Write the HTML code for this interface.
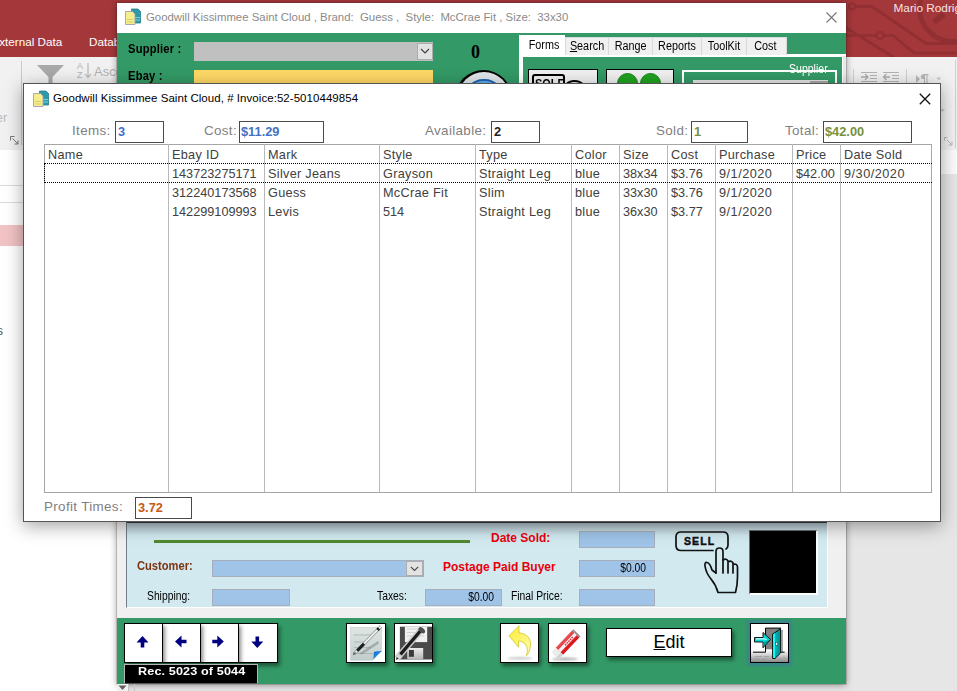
<!DOCTYPE html>
<html lang="en">
<head>
<meta charset="utf-8">
<title>Goodwill Kissimmee Saint Cloud</title>
<style>
*{box-sizing:border-box;margin:0;padding:0}
html,body{width:957px;height:691px;overflow:hidden;background:#e6e6e6;font-family:"Liberation Sans",sans-serif;}
.a{position:absolute}
.t{position:absolute;white-space:nowrap;line-height:1}
/* ---------- Access background ---------- */
#red{left:0;top:0;width:957px;height:57px;background:#a4373a}
#ribbon{left:0;top:57px;width:957px;height:93px;background:#f1f1f1}
#nav{left:0;top:150px;width:117px;height:541px;background:#fff}
#strip{left:846px;top:150px;width:111px;height:24px;background:#fbfbfb}
.rt{color:#fff;font-size:11.7px}
.gt{color:#b1b1b1;font-size:13px}
/* ---------- green window ---------- */
#win{left:117px;top:3px;width:729px;height:681px;background:#339966;box-shadow:0 0 0 1px rgba(60,40,40,.18),0 1px 7px rgba(0,0,0,.4)}
#wtitle{left:0;top:0;width:729px;height:30px;background:#fff}
.b13{font-weight:bold;font-size:12.6px;color:#000;transform:scaleX(.89);transform-origin:0 0;letter-spacing:.2px}
.tab span{display:inline-block;transform:scaleX(.9)}
.tab{top:34px;height:18px;background:#f0f0f0;border:1px solid #d9d9d9;border-bottom:none;font-size:12px;color:#000;text-align:center;line-height:17px}
.fld{background:#9fc4e7;border:1px solid #a6aebb}
.lbl{font-size:12px;color:#000;transform:scaleX(.86);transform-origin:0 0}
.lblr{transform-origin:100% 0}
.btn{background:#fff;border:1px solid #000;box-shadow:2px 3px 4px rgba(0,0,0,.45)}
/* ---------- dialog ---------- */
#dlg{left:23px;top:83px;width:918px;height:439px;background:#fff;border:1px solid #555;box-shadow:0 4px 17px rgba(0,0,0,.36)}
.dl{color:#7f7f7f;font-size:13.4px;letter-spacing:.35px}
.box{border:1px solid #4a4a4a;background:#fff;height:22px;top:37px}
.bv{font-weight:bold;font-size:12.8px;top:4px;left:2px}
.th,.td{font-size:12.7px;color:#404040;letter-spacing:.3px}
.n{letter-spacing:0}
.d{letter-spacing:.5px}
.vl{top:60px;width:1px;height:348px;background:#b9b9b9}
</style>
</head>
<body>
<!-- ================= ACCESS BACKGROUND ================= -->
<div id="red" class="a">
  <svg class="a" style="left:846px;top:0" width="111" height="57" viewBox="846 0 111 57">
    <g fill="none" stroke="#912f32" stroke-linejoin="round">
      <path d="M855 6.500 H872 L926 43.500 H958" stroke-width="3"/>
      <path d="M846 35.500 H876.500 M883.500 35.500 H893 L914 53 H958" stroke-width="2.700"/>
      <path d="M846 28 L895 58" stroke-width="2.700"/>
      <circle cx="953" cy="8" r="33.500" stroke-width="5"/>
      <path d="M934 22 L944 14" stroke-width="5.500"/>
      <circle cx="852" cy="6.500" r="3" stroke-width="2"/>
      <circle cx="880" cy="35.500" r="3.500" stroke-width="2"/>
    </g>
  </svg>
  <div class="t rt" style="left:-8.600px;top:36px">External Data</div>
  <div class="t rt" style="left:89px;top:36px">Database Tools</div>
  <div class="t rt" style="left:893.500px;top:2.800px;font-size:11.800px;color:#f6e4e4">Mario Rodriguez</div>
</div>
<div id="ribbon" class="a">
  <div class="a" style="left:21px;top:4px;width:1px;height:84px;background:#c9c9c9"></div>
  <svg class="a" style="left:36px;top:7px" width="30" height="24" viewBox="0 0 30 24"><path d="M1 1 H28 L16.500 13 V24 H12.500 V13 Z" fill="#a9a9a9"/></svg>
  <div class="t" style="left:77px;top:5px;font-size:9px;color:#b1b1b1;line-height:8.500px">A<br>Z</div>
  <svg class="a" style="left:84px;top:6px" width="8" height="16" viewBox="0 0 8 16"><path d="M4 0 V14 M1 11 L4 14.500 L7 11" fill="none" stroke="#b1b1b1" stroke-width="1.100"/></svg>
  <div class="t gt" style="left:94px;top:8px">Ascending</div>
  <div class="t gt" style="left:-4px;top:55px;font-size:12.4px;color:#b9b9b9">er</div>
  <svg class="a" style="left:10px;top:79px" width="9" height="9" viewBox="0 0 9 9"><path d="M0.500 4.500 V0.500 H4.500 M2.500 2.500 L8 8 M8 4.500 V8 H4.500" fill="none" stroke="#777" stroke-width="1"/></svg>
  <!-- right side -->
  <div class="a" style="left:853px;top:12px;width:1px;height:22px;background:#cfcfcf"></div>
  <svg class="a" style="left:861px;top:15px" width="40" height="11" viewBox="0 0 40 11">
    <g stroke="#b3b3b3" stroke-width="1" fill="none">
      <path d="M0 .5H16 M9 3.500H16 M9 6.500H16 M0 9.500H16"/>
      <path d="M22 .5H38 M31 3.500H38 M31 6.500H38 M22 9.500H38"/>
    </g>
    <g stroke="#ababab" stroke-width="1.300" fill="none">
      <path d="M0 5H7 M4 2 L7 5 L4 8"/>
      <path d="M22.500 5H29 M25.500 2 L22.500 5 L25.500 8"/>
    </g>
  </svg>
  <div class="a" style="left:906px;top:12px;width:1px;height:22px;background:#cfcfcf"></div>
  <svg class="a" style="left:916px;top:17px" width="28" height="10" viewBox="0 0 28 10">
    <path d="M0 1 L4 5 L0 9 Z" fill="#b7b7b7"/>
    <path d="M8.500 .5 V9.500 M11 .5 V9.500 M7 .6 H12.500" stroke="#b7b7b7" stroke-width="1.100" fill="none"/>
    <path d="M8.500 .5 H7 Q4.800 .5 4.800 2.800 Q4.800 5 7 5 H8.500 Z" fill="#b7b7b7"/>
    <path d="M20.300 3.500 H25.300 L22.800 6.500 Z" fill="#c6c6c6"/>
  </svg>
  <div class="a" style="left:955px;top:3px;width:1px;height:88px;background:#d0d0d0"></div>
  <svg class="a" style="left:944px;top:80px" width="9" height="9" viewBox="0 0 9 9"><path d="M0.500 3.500 V0.500 H3.500 M3 3 L8 8 M8 4.500 V8 H4.500" fill="none" stroke="#b7b7b7" stroke-width="1"/></svg>
  <svg class="a" style="left:940px;top:52px" width="5" height="4" viewBox="0 0 5 4"><path d="M0 0H5L2.500 3Z" fill="#c9c9c9"/></svg>
</div>
<div id="nav" class="a">
  <div class="a" style="left:0;top:35px;width:117px;height:1px;background:#dcdcdc"></div>
  <div class="a" style="left:0;top:52px;width:117px;height:1px;background:#dcdcdc"></div>
  <div class="a" style="left:0;top:75px;width:117px;height:21px;background:#f1c3c4"></div>
  <div class="t" style="left:-3px;top:174.500px;font-size:12px;color:#555">s</div>
</div>
<div id="strip" class="a"></div>

<!-- ================= GREEN FORM WINDOW ================= -->
<div id="win" class="a">
  <div id="wtitle" class="a">
    <svg class="a" style="left:7px;top:5px" width="18" height="18" viewBox="0 0 18 18">
      <path d="M7.500 1 H14 L16.500 3.500 V15 H7.500 Z" fill="#2d9aa9" stroke="#23818f" stroke-width=".8"/>
      <path d="M10 9.500H16 M10 12H16" stroke="#7fd0da" stroke-width="1"/>
      <path d="M1.500 3.500 H8.500 L11 6 V16.500 H1.500 Z" fill="#f4ee8d" stroke="#a79bb5" stroke-width=".9"/>
      <path d="M3 11.500H9 M3 14H9" stroke="#d8cf6c" stroke-width="1"/>
    </svg>
    <div class="t" style="left:29px;top:9px;font-size:11.400px;color:#8a8a8a">Goodwill Kissimmee Saint Cloud , Brand:&nbsp; Guess ,&nbsp; Style:&nbsp; McCrae Fit , Size:&nbsp; 33x30</div>
    <svg class="a" style="left:708.500px;top:9px" width="11" height="11" viewBox="0 0 11 11"><path d="M.5 .5 L10.500 10.500 M10.500 .5 L.5 10.500" stroke="#777" stroke-width="1.100"/></svg>
  </div>
  <!-- header controls -->
  <div class="t b13" style="left:11px;top:39.700px">Supplier :</div>
  <div class="a" style="left:77px;top:39px;width:239px;height:19px;background:#c0c0c0"></div>
  <div class="a" style="left:300px;top:40px;width:16px;height:17px;background:#e3e3e3;border:1px solid #adadad"></div>
  <svg class="a" style="left:303px;top:45px" width="10" height="7" viewBox="0 0 10 7"><path d="M1 1 L5 5 L9 1" fill="none" stroke="#444" stroke-width="1.200"/></svg>
  <div class="t b13" style="left:11px;top:67px">Ebay :</div>
  <div class="a" style="left:77px;top:67px;width:239px;height:19px;background:#ffd966"></div>
  <div class="t" style="left:354px;top:40px;font-family:'Liberation Serif',serif;font-weight:bold;font-size:18px;color:#000">0</div>
  <div class="a" style="left:338.400px;top:67px;width:57px;height:57px;border-radius:50%;background:#000"></div>
  <div class="a" style="left:340.700px;top:69.300px;width:52.400px;height:52.400px;border-radius:50%;background:radial-gradient(circle,#dfe5e9 0,#dfe5e9 72%,#bcc8d0 86%,#e6eaed 100%)"></div>
  <div class="a" style="left:347px;top:75.600px;width:39.800px;height:39.800px;border-radius:50%;background:#62aeea;border:2px solid #1d68b8"></div>
  <!-- tab control -->
  <div class="a" style="left:402px;top:51px;width:327px;height:300px;background:#fff"></div>
  <div class="a" style="left:406px;top:54px;width:319px;height:300px;background:#339966"></div>
  <div class="a" style="left:726px;top:53px;width:3px;height:300px;background:#e9e9e9"></div>
  <div class="a tab" style="left:402px;top:32px;width:46px;height:21px;background:#fff;border-color:#fff;line-height:18px;text-align:left;padding-left:7px"><span>Forms</span></div>
  <div class="a tab" style="left:448px;width:44px"><span><u>S</u>earch</span></div>
  <div class="a tab" style="left:491px;width:45px"><span>Range</span></div>
  <div class="a tab" style="left:535px;width:50px"><span>Reports</span></div>
  <div class="a tab" style="left:584px;width:46px"><span>ToolKit</span></div>
  <div class="a tab" style="left:629px;width:41px;text-align:left;padding-left:6px"><span>Cost</span></div>
  <div class="a" style="left:411px;top:66px;width:70px;height:60px;background:#f0f0f0;border:1px solid #000"></div>
  <div class="a" style="left:415px;top:71px;width:33px;height:20px;border:2px solid #000;border-radius:3px"></div>
  <div class="t" style="left:418px;top:74px;font-weight:bold;font-size:13px;color:#000;transform:scaleX(.84);transform-origin:0 0">SOLE</div>
  <div class="a" style="left:443.500px;top:77.400px;width:27px;height:27px;border-radius:50%;border:2px solid #000"></div>
  <div class="a" style="left:489px;top:66px;width:68px;height:60px;background:#f0f0f0;border:1px solid #000"></div>
  <div class="a" style="left:500.200px;top:70.400px;width:21.200px;height:21.200px;border-radius:50%;background:#1fa21f;border:1px solid #178217"></div>
  <div class="a" style="left:523.200px;top:70.400px;width:21.200px;height:21.200px;border-radius:50%;background:#1fa21f;border:1px solid #178217"></div>
  <div class="a" style="left:565px;top:67px;width:155px;height:100px;border:2px solid #fff"></div>
  <div class="a" style="left:576px;top:77px;width:135px;height:50px;background:#e4e4e4"></div>
  <div class="a" style="left:693px;top:78px;width:18px;height:50px;background:#a9a9a9"></div>
  <div class="t" style="left:672px;top:59.500px;font-size:12.4px;color:#fff;transform:scaleX(.85);transform-origin:0 0">Supplier</div>

  <!-- detail section under dialog -->
  <div class="a" style="left:0;top:518px;width:729px;height:97px;background:#f0f0f0"></div>
  <div class="a" style="left:9px;top:518px;width:702px;height:87px;background:#d2e9f0;border-left:1px solid #6f7d84;border-right:1px solid #fff;border-bottom:1px solid #fff"></div>
  <div class="a" style="left:10px;top:519px;width:700px;height:14px;background:linear-gradient(#33393c 0,#33393c 1px,#a9bcc3 1px,#c0d5dc 45%,#d2e9f0)"></div>
  <div class="a" style="left:37px;top:537px;width:316px;height:3px;background:#4f8a2f"></div>
  <div class="t" style="left:20px;top:557px;font-size:12.4px;font-weight:bold;color:#7d3410;transform:scaleX(.9);transform-origin:0 0">Customer:</div>
  <div class="a fld" style="left:95px;top:557px;width:212px;height:17px"></div>
  <div class="a" style="left:289px;top:558px;width:17px;height:15px;background:#e3e3e3;border:1px solid #adadad"></div>
  <svg class="a" style="left:293px;top:563px" width="9" height="6" viewBox="0 0 9 6"><path d="M.8 .8 L4.500 4.500 L8.200 .8" fill="none" stroke="#444" stroke-width="1.100"/></svg>
  <div class="t lbl" style="left:30px;top:587px">Shipping:</div>
  <div class="a fld" style="left:95px;top:586px;width:78px;height:17px"></div>
  <div class="t lbl" style="left:260px;top:587px">Taxes:</div>
  <div class="a fld" style="left:308px;top:586px;width:77px;height:17px"></div>
  <div class="t lbl lblr" style="right:352px;top:588px">$0.00</div>
  <div class="t lbl" style="left:394px;top:587px">Final Price:</div>
  <div class="a fld" style="left:462px;top:586px;width:76px;height:17px"></div>
  <div class="t" style="left:374px;top:529px;font-size:12px;font-weight:bold;color:#e8000b">Date Sold:</div>
  <div class="a fld" style="left:462px;top:528px;width:76px;height:17px"></div>
  <div class="t" style="left:326px;top:558px;font-size:12px;font-weight:bold;color:#e8000b">Postage Paid Buyer</div>
  <div class="a fld" style="left:462px;top:557px;width:76px;height:17px"></div>
  <div class="t lbl lblr" style="right:200px;top:559px">$0.00</div>
  <!-- SELL icon -->
  <svg class="a" style="left:556px;top:526px" width="70" height="68" viewBox="0 0 70 68">
    <g fill="none" stroke="#111" stroke-width="1.700" stroke-linecap="round" stroke-linejoin="round">
      <path d="M40 21.500 H8 Q3 21.500 3 16.500 V8 Q3 3 8 3 H50 Q55 3 55 8 V16 Q55 19 53 20"/>
      <path d="M43 44 V22.500 Q43 19 46.500 19 Q50 19 50 22.500 V44"/>
      <path d="M50 31 Q53.500 29 55 32 V44 M55 33 Q58.500 31 60 34 V44 M60 35.500 Q64 34 64.500 38 V48 Q64.500 56 62.500 63.500 H45 Q43 56 38 50 Q33 44 32 37 Q31.500 33 34 33.500 Q37 34 39 41 L43 44"/>
    </g>
    <text x="11" y="16.200" font-family="Liberation Sans, sans-serif" font-weight="bold" font-size="10.500" letter-spacing="1.100" fill="#111" stroke="#111" stroke-width=".45">SELL</text>
  </svg>
  <!-- black box -->
  <div class="a" style="left:632px;top:527px;width:69px;height:65px;background:#000;border-top:1px solid #6b6b6b;border-left:1px solid #6b6b6b;border-right:2px solid #fff;border-bottom:2px solid #fff"></div>

  <!-- footer buttons -->
  <div class="a btn" style="left:121px;top:620px;width:40px;height:40px"></div>
  <div class="a btn" style="left:83px;top:620px;width:39px;height:40px"></div>
  <div class="a btn" style="left:45px;top:620px;width:39px;height:40px"></div>
  <div class="a btn" style="left:7px;top:620px;width:39px;height:40px"></div>
  <svg class="a" style="left:7px;top:620px" width="154" height="40" viewBox="0 0 154 40" fill="#000080">
    <path d="M18.500 13 L24.500 19.500 H20.300 V24.500 H16.700 V19.500 H12.500 Z"/>
    <path d="M51 18.500 L57.500 12.500 V16.700 H62.500 V20.300 H57.500 V24.500 Z"/>
    <path d="M99.800 18.500 L93.300 12.500 V16.700 H88.300 V20.300 H93.300 V24.500 Z"/>
    <path d="M133.300 25 L139.300 18.500 H135.100 V13.500 H131.500 V18.500 H127.300 Z"/>
  </svg>
  <div class="a" style="left:7px;top:661px;width:134px;height:20px;background:#000;border:1px solid #b5b5b5;border-bottom-color:#555"></div>
  <div class="t" style="left:20.600px;top:663.200px;font-size:11.200px;font-weight:bold;color:#fff;transform:scaleX(1.13);transform-origin:0 0;letter-spacing:.1px">Rec. 5023 of 5044</div>

  <div class="a btn" id="ic1" style="left:229px;top:620px;width:40px;height:40px"></div>
  <svg class="a" style="left:229px;top:620px" width="40" height="40" viewBox="0 0 40 40">
    <defs>
      <linearGradient id="g1" x1="0" y1="0" x2="0" y2="1"><stop offset="0" stop-color="#dfe6e4"/><stop offset="1" stop-color="#c2cdcb"/></linearGradient>
      <linearGradient id="g1b" x1="0" y1="0" x2="1" y2="1"><stop offset="0" stop-color="#0a5fc4"/><stop offset="1" stop-color="#45b4ff"/></linearGradient>
    </defs>
    <rect x="4.500" y="4.200" width="31" height="33" fill="url(#g1)" stroke="#bcc7c5" stroke-width=".5"/>
    <path d="M7.500 12H26 M8 19H22 M8 24.600H24 M7.500 30.500H27" stroke="#9ea9a7" stroke-width=".7" fill="none"/>
    <path d="M13 30.500 L32 18 L33 20.500 L16 31.500 Z" fill="#7e8a88" opacity=".55"/>
    <path d="M26.800 37.600 L36 27.400 V38 H26.800 Z" fill="#fff"/>
    <path d="M28 28.700 L36 27.700 L27.300 36.300 Z" fill="url(#g1b)"/>
    <g stroke-linecap="butt" fill="none">
      <path d="M8 31 L35 3.400" stroke="#8d9796" stroke-width="3.200"/>
      <path d="M8 31 L35 3.400" stroke="#f4f6f6" stroke-width="1.600"/>
      <path d="M11.200 27.700 L18 20.800" stroke="#1c1c1c" stroke-width="3"/>
      <path d="M31.500 7 L33 5.400" stroke="#1c1c1c" stroke-width="3.200"/>
      <path d="M7.300 31.700 L9.500 29.500" stroke="#555" stroke-width="1.400"/>
    </g>
  </svg>
  <div class="a btn" id="ic2" style="left:277px;top:620px;width:39px;height:40px"></div>
  <svg class="a" style="left:277px;top:620px" width="40" height="40" viewBox="0 0 40 40">
    <defs>
      <linearGradient id="g2" x1="0" y1="0" x2="0" y2="1"><stop offset="0" stop-color="#ececec"/><stop offset="1" stop-color="#b5b5b5"/></linearGradient>
      <clipPath id="c2"><rect x="1" y="1" width="37" height="38"/></clipPath>
    </defs>
    <g clip-path="url(#c2)">
      <rect x="5.900" y="3.700" width="33" height="32.800" fill="#4b4b4b"/>
      <rect x="10.900" y="3.700" width="22.300" height="15.400" fill="#f1f1f1"/>
      <path d="M13 6H30 M13 9.500H30 M13 13H30" stroke="#c9c9c9" stroke-width=".8"/>
      <rect x="13.200" y="25" width="16" height="11.500" fill="url(#g2)"/>
      <rect x="14.900" y="27" width="5" height="6.800" fill="#3a3a3a"/>
      <path d="M3 35.500 L27.200 7" stroke="#c9c9c9" stroke-width="6.200" fill="none"/>
      <path d="M6.500 31.400 L27.200 7" stroke="#1b1b1b" stroke-width="3.200" fill="none"/>
      <path d="M2 37 L3.200 31 L8 35 Z" fill="#d8d8d8"/>
      <path d="M2 37 L2.700 34 L4.600 35.600 Z" fill="#222"/>
      <ellipse cx="27.800" cy="7.200" rx="3.800" ry="2.300" transform="rotate(40 27.800 7.200)" fill="#4e4e4e"/>
    </g>
  </svg>
  <div class="a btn" id="ic3" style="left:383px;top:620px;width:39px;height:40px"></div>
  <svg class="a" style="left:383px;top:620px" width="39" height="40" viewBox="0 0 39 40">
    <defs>
      <linearGradient id="g3" x1="0" y1="0" x2="1" y2="1"><stop offset="0" stop-color="#fbee3a"/><stop offset=".6" stop-color="#fdf578"/><stop offset="1" stop-color="#fffbc4"/></linearGradient>
      <filter id="bl3" x="-20%" y="-200%" width="140%" height="500%"><feGaussianBlur stdDeviation="1"/></filter>
    </defs>
    <ellipse cx="20" cy="35.300" rx="13" ry="1.300" fill="#000" opacity=".22" filter="url(#bl3)"/>
    <path d="M9 12.700 L19 2.700 V10 C26 10 31 15 30.500 22 C30.200 27 28.500 30.500 26.400 32.800 C28 27.500 27.500 23.500 25 21 C23 19 21 18.200 18.600 18 V24.300 Z" fill="url(#g3)" stroke="#cdc52a" stroke-width=".8" stroke-linejoin="round"/>
  </svg>
  <div class="a btn" id="ic4" style="left:431px;top:620px;width:39px;height:40px"></div>
  <svg class="a" style="left:431px;top:620px" width="39" height="40" viewBox="0 0 39 40">
    <defs>
      <filter id="bl4" x="-20%" y="-200%" width="140%" height="500%"><feGaussianBlur stdDeviation="1"/></filter>
      <linearGradient id="g4" x1="0" y1="0" x2="0" y2="1"><stop offset="0" stop-color="#d90f14"/><stop offset="1" stop-color="#e8545a"/></linearGradient>
    </defs>
    <ellipse cx="17" cy="36" rx="13" ry="1.400" fill="#000" opacity=".3" filter="url(#bl4)"/>
    <g transform="translate(28.900 9.700) rotate(133.500)">
      <rect x="0" y="-5" width="31.800" height="10" fill="#f0f0f0"/>
      <rect x="1.800" y="-5" width="23.700" height="10" fill="url(#g4)"/>
      <rect x="1.800" y="-1.600" width="23.700" height="3.300" fill="#f7f1f1"/>
      <path d="M6 0 H18" stroke="#d9383c" stroke-width="1.400" stroke-dasharray="1.600 .8"/>
      <rect x="0" y="-5" width="1.800" height="10" fill="#8f8f8f"/>
      <rect x="25.500" y="-5" width="6.300" height="10" fill="#ececec"/>
      <rect x="25.500" y="-5" width="6.300" height="3" fill="#d2d2d2"/>
    </g>
  </svg>
  <div class="a btn" style="left:489px;top:625px;width:126px;height:29px;text-align:center;font-size:18px;line-height:27px;color:#000"><u>E</u>dit</div>
  <div class="a" id="ic5" style="left:633px;top:620px;width:39px;height:40px;background:#fff;box-shadow:0 0 2px 3px #3a8689;border-radius:1px"></div>
  <svg class="a" style="left:633px;top:620px" width="39" height="40" viewBox="0 0 39 40">
    <defs>
      <linearGradient id="g5" x1="0" y1="0" x2="0" y2="1"><stop offset="0" stop-color="#fff"/><stop offset=".68" stop-color="#fdfdfd"/><stop offset=".8" stop-color="#d4d4d4"/><stop offset="1" stop-color="#858585"/></linearGradient>
      <linearGradient id="g5d" x1="0" y1="0" x2="1" y2="0"><stop offset="0" stop-color="#00c4c4"/><stop offset="1" stop-color="#008c8c"/></linearGradient>
    </defs>
    <rect x=".5" y=".5" width="38" height="39" fill="url(#g5)" stroke="#000"/>
    <path d="M5 33.500H12 M14 33.500H19 M21 33.500H23 M4 36H10 M13 36H16 M27 36H31 M33 35H36" stroke="#9b9b9b" stroke-width=".8"/>
    <rect x="31" y="7" width="2" height="22" fill="#555" opacity=".5"/>
    <rect x="15.500" y="5.100" width="15.500" height="21.200" fill="#808080"/>
    <path d="M15.500 29.200 V5.100 H31" stroke="#000" stroke-width="1" fill="none"/>
    <path d="M3 29.200 H15.500 M31 29.200 H34.600" stroke="#000" stroke-width="1"/>
    <path d="M22.600 11.200 L30.600 5.700 V30 L25 35.500 H22.600 Z" fill="url(#g5d)" stroke="#000" stroke-width=".9" stroke-linejoin="round"/>
    <path d="M23.100 11.400 L24.900 10.100 V35 H23.100 Z" fill="#18ffff"/>
    <rect x="25.800" y="19.400" width="1.600" height="2.800" fill="#fff" stroke="#222" stroke-width=".4"/>
    <path d="M4.500 14.500 H13 V9.500 L20.500 16.400 L13 24.800 V19 H4.500 Z" fill="#00d8d8" stroke="#000" stroke-width=".9" stroke-linejoin="round"/>
    <path d="M13.500 19.500 V23.600 L19.500 16.800 Z" fill="#009c9c"/>
    <path d="M6 15.900 H14.500 L16.500 16.400" stroke="#fff" stroke-width="1" fill="none"/>
  </svg>
</div>
<!-- scrollbar bit under window -->
<div class="a" style="left:117px;top:684px;width:12px;height:7px;background:#f0f0f0;border-right:1px solid #bdbdbd"></div>
<div class="a" style="left:134px;top:684px;width:1px;height:7px;background:#c8c8c8"></div>
<svg class="a" style="left:118px;top:685px" width="9" height="6" viewBox="0 0 9 6"><path d="M.5 .5 H8.500 L4.500 5 Z" fill="#606060"/></svg>

<!-- ================= INVOICE DIALOG ================= -->
<div id="dlg" class="a">
  <svg class="a" style="left:8px;top:6px" width="18" height="18" viewBox="0 0 18 18">
    <path d="M7.500 1 H14 L16.500 3.500 V15 H7.500 Z" fill="#2d9aa9" stroke="#23818f" stroke-width=".8"/>
    <path d="M10 9.500H16 M10 12H16" stroke="#7fd0da" stroke-width="1"/>
    <path d="M1.500 3.500 H8.500 L11 6 V16.500 H1.500 Z" fill="#f4ee8d" stroke="#a79bb5" stroke-width=".9"/>
    <path d="M3 11.500H9 M3 14H9" stroke="#d8cf6c" stroke-width="1"/>
  </svg>
  <div class="t" style="left:29px;top:9px;font-size:11.500px;color:#000;letter-spacing:.05px">Goodwill Kissimmee Saint Cloud, # Invoice:52-5010449854</div>
  <svg class="a" style="left:895px;top:9px" width="12" height="12" viewBox="0 0 12 12"><path d="M.8 .8 L11.200 11.200 M11.200 .8 L.8 11.200" stroke="#111" stroke-width="1.300"/></svg>

  <div class="t dl" style="left:48px;top:40px">Items:</div>
  <div class="a box" style="left:91px;width:49px"><div class="t bv" style="color:#4472c4">3</div></div>
  <div class="t dl" style="left:180px;top:40px">Cost:</div>
  <div class="a box" style="left:215px;width:85px"><div class="t bv" style="color:#4472c4;left:1px">$11.29</div></div>
  <div class="t dl" style="left:401px;top:40px">Available:</div>
  <div class="a box" style="left:467px;width:49px"><div class="t bv" style="color:#222">2</div></div>
  <div class="t dl" style="left:632px;top:40px">Sold:</div>
  <div class="a box" style="left:667px;width:57px"><div class="t bv" style="color:#76923c">1</div></div>
  <div class="t dl" style="left:761px;top:40px">Total:</div>
  <div class="a box" style="left:799px;width:89px"><div class="t bv" style="color:#76923c;left:1px">$42.00</div></div>

  <!-- table -->
  <div class="a" id="tbl" style="left:20px;top:60px;width:888px;height:349px;border:1px solid #a6a6a6;background:#fff"></div>
  <div class="a vl" style="left:144px"></div>
  <div class="a vl" style="left:240px"></div>
  <div class="a vl" style="left:355px"></div>
  <div class="a vl" style="left:451px"></div>
  <div class="a vl" style="left:547px"></div>
  <div class="a vl" style="left:595px"></div>
  <div class="a vl" style="left:643px"></div>
  <div class="a vl" style="left:691px"></div>
  <div class="a vl" style="left:768px"></div>
  <div class="a vl" style="left:816px"></div>
  <div class="a" style="left:20px;top:79px;width:888px;height:20px;border-top:1px dotted #000;border-bottom:1px dotted #000;border-left:1px dotted #000"></div>

  <div class="t th" style="left:24px;top:65.1px">Name</div>
  <div class="t th" style="left:148px;top:65.1px">Ebay ID</div>
  <div class="t th" style="left:244px;top:65.1px">Mark</div>
  <div class="t th" style="left:359px;top:65.1px">Style</div>
  <div class="t th" style="left:455px;top:65.1px">Type</div>
  <div class="t th" style="left:551px;top:65.1px">Color</div>
  <div class="t th" style="left:599px;top:65.1px">Size</div>
  <div class="t th" style="left:647px;top:65.1px">Cost</div>
  <div class="t th" style="left:695px;top:65.1px">Purchase</div>
  <div class="t th" style="left:772px;top:65.1px">Price</div>
  <div class="t th" style="left:820px;top:65.1px">Date Sold</div>

  <div class="t td n" style="left:148px;top:83.5px">143723275171</div>
  <div class="t td" style="left:244px;top:83.5px">Silver Jeans</div>
  <div class="t td" style="left:359px;top:83.5px">Grayson</div>
  <div class="t td" style="left:455px;top:83.5px">Straight Leg</div>
  <div class="t td" style="left:551px;top:83.5px">blue</div>
  <div class="t td n" style="left:599px;top:83.5px">38x34</div>
  <div class="t td n" style="left:647px;top:83.5px">$3.76</div>
  <div class="t td n d" style="left:695px;top:83.5px">9/1/2020</div>
  <div class="t td n" style="left:772px;top:83.5px">$42.00</div>
  <div class="t td n d" style="left:820px;top:83.5px">9/30/2020</div>

  <div class="t td n" style="left:148px;top:102.5px">312240173568</div>
  <div class="t td" style="left:244px;top:102.5px">Guess</div>
  <div class="t td" style="left:359px;top:102.5px">McCrae Fit</div>
  <div class="t td" style="left:455px;top:102.5px">Slim</div>
  <div class="t td" style="left:551px;top:102.5px">blue</div>
  <div class="t td n" style="left:599px;top:102.5px">33x30</div>
  <div class="t td n" style="left:647px;top:102.5px">$3.76</div>
  <div class="t td n d" style="left:695px;top:102.5px">9/1/2020</div>

  <div class="t td n" style="left:148px;top:121.5px">142299109993</div>
  <div class="t td" style="left:244px;top:121.5px">Levis</div>
  <div class="t td n" style="left:359px;top:121.5px">514</div>
  <div class="t td" style="left:455px;top:121.5px">Straight Leg</div>
  <div class="t td" style="left:551px;top:121.5px">blue</div>
  <div class="t td n" style="left:599px;top:121.5px">36x30</div>
  <div class="t td n" style="left:647px;top:121.5px">$3.77</div>
  <div class="t td n d" style="left:695px;top:121.5px">9/1/2020</div>

  <div class="t dl" style="left:20px;top:416px">Profit Times:</div>
  <div class="a box" style="left:111px;top:413px;width:57px;height:22px"><div class="t bv" style="color:#c55a11">3.72</div></div>
</div>
</body>
</html>
